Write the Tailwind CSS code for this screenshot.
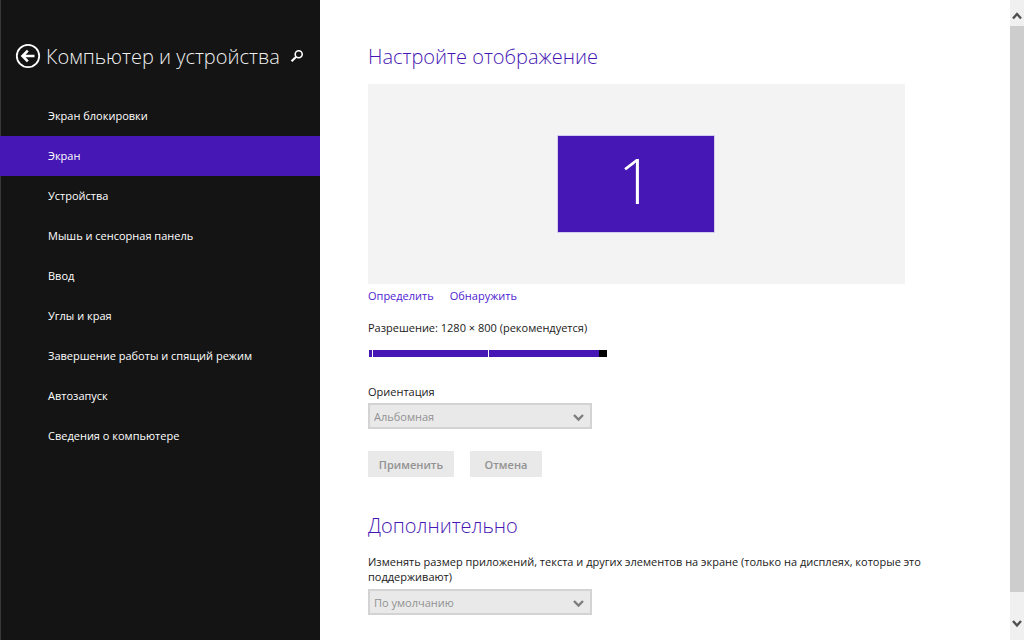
<!DOCTYPE html>
<html lang="ru">
<head>
<meta charset="utf-8">
<meta name="viewport" content="width=device-width, initial-scale=1">
<title>Компьютер и устройства</title>
<script src="https://cdn.jsdelivr.net/npm/@tailwindcss/browser@4"></script>
</head>
<body class="flex h-screen overflow-hidden bg-white font-['Open_Sans','Noto_Sans',sans-serif] text-[11px] leading-[15px] text-[#1a1a1a]">
  <aside class="w-80 shrink-0 border-l border-[#383838] bg-[#141414] text-white">
    <header class="flex h-24 items-center pt-4 pr-4 pl-[14px]">
      <button type="button" aria-label="Назад" class="shrink-0">
        <svg class="size-[26px]" viewBox="0 0 26 26" fill="none" stroke="#fff">
          <circle cx="13" cy="13" r="11.2" stroke-width="1.8"/>
          <path d="M19.5 13H8M12.8 7.7 7.5 13l5.3 5.3" stroke-width="2.6"/>
        </svg>
      </button>
      <h1 class="ml-[5px] flex-1 whitespace-nowrap pt-0.5 text-[20px] leading-7 font-[350] text-[#f0f0f0]">Компьютер и устройства</h1>
      <button type="button" aria-label="Поиск" class="shrink-0">
        <svg class="size-[14px]" viewBox="0 0 14 14" fill="none" stroke="#fff">
          <circle cx="8.7" cy="5.2" r="3.5" stroke-width="1.6"/>
          <path d="M6.2 7.8 1.6 12.2" stroke-width="2.2"/>
        </svg>
      </button>
    </header>
    <nav class="-ml-px flex flex-col">
      <a href="#" class="flex h-10 items-center pb-0.5 pl-12">Экран блокировки</a>
      <a href="#" aria-current="page" class="flex h-10 items-center bg-[#4617b4] pb-0.5 pl-12">Экран</a>
      <a href="#" class="flex h-10 items-center pb-0.5 pl-12">Устройства</a>
      <a href="#" class="flex h-10 items-center pb-0.5 pl-12">Мышь и сенсорная панель</a>
      <a href="#" class="flex h-10 items-center pb-0.5 pl-12">Ввод</a>
      <a href="#" class="flex h-10 items-center pb-0.5 pl-12">Углы и края</a>
      <a href="#" class="flex h-10 items-center pb-0.5 pl-12">Завершение работы и спящий режим</a>
      <a href="#" class="flex h-10 items-center pb-0.5 pl-12">Автозапуск</a>
      <a href="#" class="flex h-10 items-center pb-0.5 pl-12">Сведения о компьютере</a>
    </nav>
  </aside>

  <main class="min-w-0 flex-1 overflow-hidden px-12 pt-[43px]">
    <div class="max-w-[537px]">
      <h2 class="text-[20px] leading-7 font-[350] text-[#4617b4]">Настройте отображение</h2>
      <div class="mt-[13px] flex h-[200px] items-center justify-center bg-[#f3f3f3] pr-px">
        <button type="button" class="flex h-[98px] w-[158px] items-center justify-center border border-[#d5cbee] bg-[#4617b4] pb-2 text-[62px] leading-none font-light text-white">1</button>
      </div>
      <div class="mt-1 flex gap-4 text-[#4f1bd0]">
        <a href="#">Определить</a>
        <a href="#">Обнаружить</a>
      </div>
      <label for="res" class="mt-[17px] block">Разрешение: 1280 × 800 (рекомендуется)</label>
      <div class="relative mt-[15px] ml-px h-[7px] w-[238px]">
        <input id="res" type="range" min="0" max="2" value="2" class="block h-[7px] w-full appearance-none bg-[#4617b4] [&::-webkit-slider-thumb]:h-[7px] [&::-webkit-slider-thumb]:w-2 [&::-webkit-slider-thumb]:appearance-none [&::-webkit-slider-thumb]:bg-black">
        <span class="absolute top-0 left-[3px] h-full w-px bg-white"></span>
        <span class="absolute top-0 left-1/2 h-full w-px bg-white"></span>
      </div>
      <label for="orient" class="mt-[27px] block">Ориентация</label>
      <div class="relative mt-1 h-[26px] w-56">
        <select id="orient" disabled class="size-full appearance-none border-2 border-[#d3d3d3] bg-[#e9e9e9] px-1 text-[#919191] opacity-100"><option>Альбомная</option></select>
        <svg class="pointer-events-none absolute top-[10px] right-2 h-[9px] w-[11px]" viewBox="0 0 11 9" fill="none" stroke="#7d7d7d" stroke-width="2.4"><path d="M1 2l4.5 4.5L10 2"/></svg>
      </div>
      <div class="mt-[22px] flex gap-4 font-semibold text-[#929292]">
        <button type="button" disabled class="h-[26px] w-[86px] bg-[#e9e9e9]">Применить</button>
        <button type="button" disabled class="h-[26px] w-[72px] bg-[#e9e9e9]">Отмена</button>
      </div>
      <h2 class="mt-[35px] text-[20px] leading-7 font-[350] text-[#4617b4]">Дополнительно</h2>
      <label for="scale" class="mt-[14px] -mr-5 block">Изменять размер приложений, текста и других элементов на экране (только на дисплеях, которые это поддерживают)</label>
      <div class="relative mt-[5px] h-[26px] w-56">
        <select id="scale" disabled class="size-full appearance-none border-2 border-[#d3d3d3] bg-[#e9e9e9] px-1 text-[#919191] opacity-100"><option>По умолчанию</option></select>
        <svg class="pointer-events-none absolute top-[10px] right-2 h-[9px] w-[11px]" viewBox="0 0 11 9" fill="none" stroke="#7d7d7d" stroke-width="2.4"><path d="M1 2l4.5 4.5L10 2"/></svg>
      </div>
    </div>
  </main>

  <div class="flex w-[14px] shrink-0 flex-col bg-[#f0f0f0]">
    <button type="button" aria-label="Прокрутить вверх" class="flex h-[26px] items-end justify-center pb-[5px]">
      <svg class="h-[9px] w-[10px]" viewBox="0 0 10 9" fill="none" stroke="#505050" stroke-width="2.4"><path d="M1 6.5 5 2l4 4.5"/></svg>
    </button>
    <div class="flex-1 bg-[#cdcdcd]"></div>
    <button type="button" aria-label="Прокрутить вниз" class="flex h-12 items-end justify-center pb-3">
      <svg class="h-[9px] w-[10px]" viewBox="0 0 10 9" fill="none" stroke="#505050" stroke-width="2.4"><path d="M1 2l4 4.5L9 2"/></svg>
    </button>
  </div>
</body>
</html>
